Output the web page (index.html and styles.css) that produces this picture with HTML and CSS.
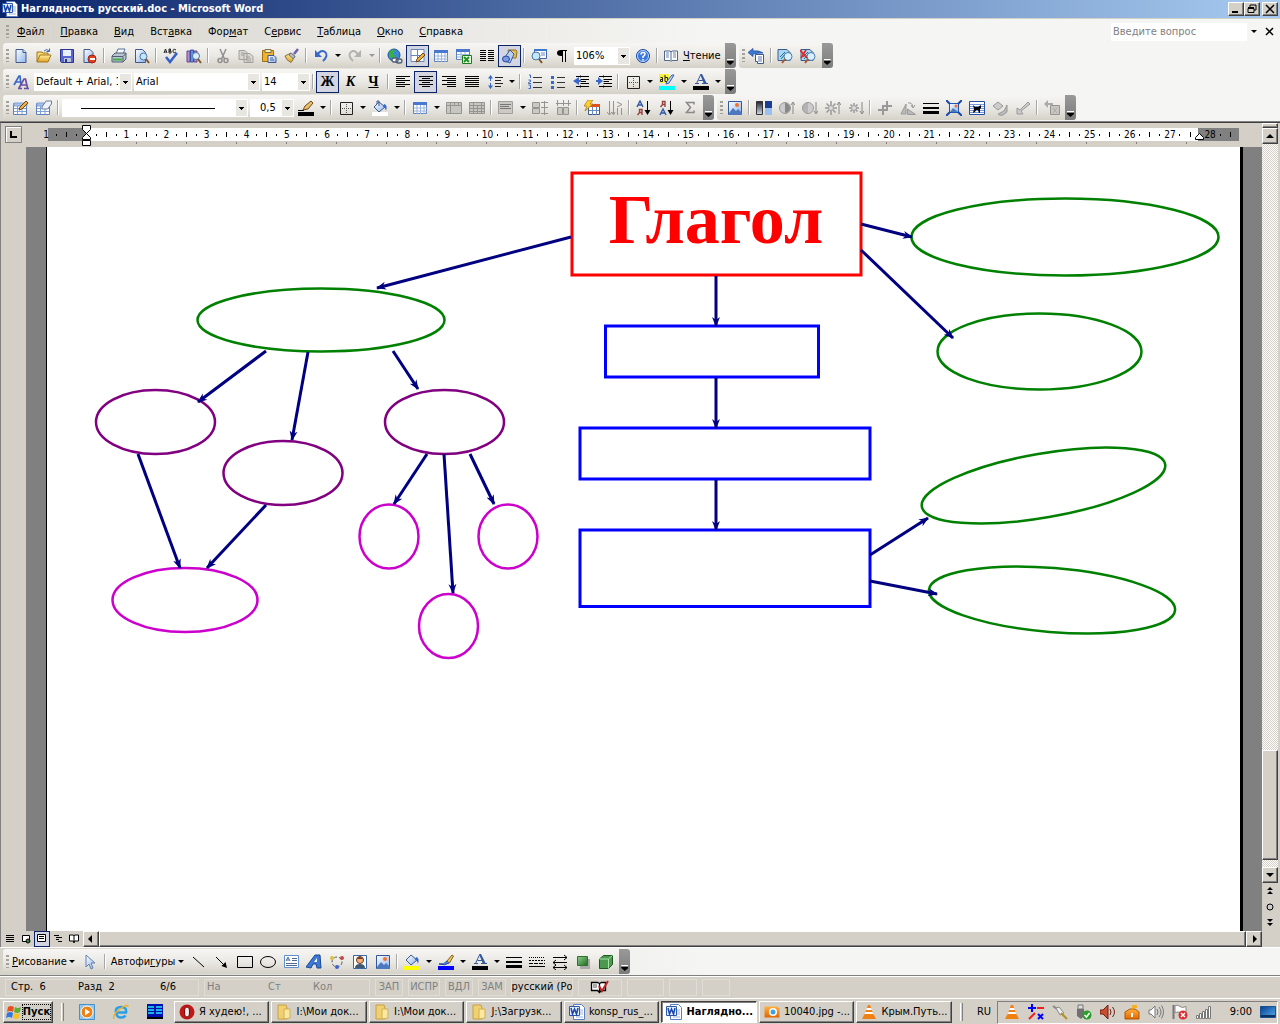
FILE: index.html
```html
<!DOCTYPE html>
<html lang="ru">
<head>
<meta charset="utf-8">
<title>Наглядность русский.doc - Microsoft Word</title>
<link rel="stylesheet" href="styles.css">
</head>
<body>
<svg class="defs" aria-hidden="true">
<defs>
<linearGradient id="gb" x2="1" y2="1"><stop stop-color="#fff"/><stop offset="1" stop-color="#8fb4ea"/></linearGradient>
<linearGradient id="gy" x2="0" y2="1"><stop stop-color="#fff0a0"/><stop offset="1" stop-color="#e0a020"/></linearGradient>
<linearGradient id="go" x2="0" y2="1"><stop stop-color="#ffb040"/><stop offset="1" stop-color="#e06800"/></linearGradient>
<linearGradient id="gg" x2="1" y2="1"><stop stop-color="#8fd08f"/><stop offset="1" stop-color="#1e6b1e"/></linearGradient>
<linearGradient id="gd" x2="0" y2="1"><stop stop-color="#223"/><stop offset="1" stop-color="#cde"/></linearGradient>
<linearGradient id="gs" x2="1" y2="1"><stop stop-color="#0a3c90"/><stop offset="1" stop-color="#50b0f0"/></linearGradient>
</defs>
<symbol id="word" viewBox="0 0 16 16"><path d="M4.500.5h8l3 3v12h-11z" fill="#fff" stroke="#5a7fc0"/><path d="M10 6h4M10 8h4M10 10h4M7 13h7" stroke="#9ab4e0"/><path d="M.5 2.500h10v9H.5z" fill="#e8f0ff" stroke="#2a58b0"/><path d="M2 4l1.500 6L5.500 5l2 5L9 4" fill="none" stroke="#1845a8" stroke-width="1.500"/></symbol>
<symbol id="new" viewBox="0 0 16 16"><path d="M3 1.500h7l3 3v10H3z" fill="url(#gb)" stroke="#3c5a90"/><path d="M10 1.500v3h3" fill="#dfe9fa" stroke="#3c5a90"/></symbol>
<symbol id="open" viewBox="0 0 16 16"><path d="M1 14V4h5l1 1h5v3" fill="#f8d870" stroke="#a07820"/><path d="M1 14l3-7h11l-3 7z" fill="url(#gy)" stroke="#a07820"/><path d="M8 3q3-3 5 0M13.500.5v3h-3" fill="none" stroke="#3c68b0"/></symbol>
<symbol id="save" viewBox="0 0 16 16"><path d="M1.500 1.500h13v13h-12l-1-1z" fill="#5968d0" stroke="#28348c"/><path d="M4 2h8v6H4z" fill="#e8f0ff"/><path d="M5 10h7v4H5z" fill="#bcc4d8"/><path d="M6 11h2v3H6z" fill="#28348c"/></symbol>
<symbol id="perm" viewBox="0 0 16 16"><path d="M2 1.500h6l3 3v10H2z" fill="url(#gb)" stroke="#3c5a90"/><circle cx="10" cy="11" r="4" fill="#e04020" stroke="#a02010"/><path d="M8 11h5" stroke="#fff" stroke-width="2"/></symbol>
<symbol id="print" viewBox="0 0 16 16"><path d="M5 6l2-5h7l-2 5" fill="#fff" stroke="#5070a0"/><path d="M1 8l3-3h11v6l-3 3H1z" fill="#b8c4d0" stroke="#506070"/><path d="M1 8.500h11l3-3M12 9v5" fill="none" stroke="#506070"/><path d="M2 11.500h9" stroke="#40b040" stroke-width="2"/></symbol>
<symbol id="preview" viewBox="0 0 16 16"><path d="M1.500 1.500h7l3 3v10h-10z" fill="url(#gb)" stroke="#3c5a90"/><circle cx="9.500" cy="8.500" r="3.500" fill="#c8e4f8" stroke="#4878a8"/><path d="M12 11l3 4" stroke="#80582c" stroke-width="2"/></symbol>
<symbol id="spell" viewBox="0 0 16 16"><path d="M1 5l1.500-4L4 5M1.500 4h2M6 5V1h1.500v2H6h2v2zM13 2q-3-2-3 1t3 1" fill="none" stroke="#222"/><path d="M3 9l4 5 7-9" fill="none" stroke="#3060c8" stroke-width="2.500"/></symbol>
<symbol id="books" viewBox="0 0 16 16"><path d="M1 3h3v11H1z" fill="#b890d0" stroke="#684088"/><path d="M4.500 2h3v12h-3z" fill="#6890e0" stroke="#3050a0"/><path d="M8 3h3v11H8z" fill="#c090c0" stroke="#684088"/><circle cx="10" cy="8" r="3.500" fill="#d8eefc" stroke="#4878a8"/><path d="M12 11l3 4" stroke="#80582c" stroke-width="2"/></symbol>
<symbol id="cut" viewBox="0 0 16 16"><path d="M5 1l4.500 10M11 1L6.500 11" stroke="#909090" stroke-width="1.500"/><circle cx="5" cy="12.500" r="2" fill="none" stroke="#909090" stroke-width="1.500"/><circle cx="11" cy="12.500" r="2" fill="none" stroke="#909090" stroke-width="1.500"/></symbol>
<symbol id="copy" viewBox="0 0 16 16"><path d="M1 2.500h6l2 2v7H1zM6 5.500h6l3 3v6H6z" fill="#d8d6d0" stroke="#a0a09c"/><path d="M3 5h3M3 7h3M8 9h4M8 11h5M8 13h5" stroke="#a0a09c"/></symbol>
<symbol id="paste" viewBox="0 0 16 16"><path d="M1.500 2.500h11v11h-11z" fill="#f0b030" stroke="#a07010"/><path d="M4 1.500h6v3H4z" fill="#f8f0c0" stroke="#807040"/><path d="M7 7.500h6l2 2v5H7z" fill="url(#gb)" stroke="#3c5a90"/><path d="M9 10h3M9 12h4" stroke="#3c5a90"/></symbol>
<symbol id="brush" viewBox="0 0 16 16"><path d="M14 1l-4 5" stroke="#7060b0" stroke-width="2.500"/><path d="M7 5l4 3.500-4 6Q2 12 1 8z" fill="url(#gy)" stroke="#807040"/><path d="M7 5l4 3.500-2 2L5 7z" fill="#b8c0c8" stroke="#707880"/></symbol>
<symbol id="undo" viewBox="0 0 16 16"><path d="M4 7Q8 1 12 4t-2 9" fill="none" stroke="#3868c8" stroke-width="2"/><path d="M2 2v7h7z" fill="#3868c8"/></symbol>
<symbol id="redo" viewBox="0 0 16 16"><path d="M11 7Q8 1 4 4t2 9" fill="none" stroke="#b4b2ae" stroke-width="2"/><path d="M14 2v7H7z" fill="#b4b2ae"/></symbol>
<symbol id="link" viewBox="0 0 16 16"><circle cx="7" cy="7" r="6" fill="#3c88d8" stroke="#2058a0"/><path d="M3 3q4-3 5 0l-2 3 3 2-2 4-4-3-1-3z" fill="#38b048"/><rect x="5" y="10" width="6" height="4" rx="2" fill="#fff" stroke="#506078" stroke-width="1.300"/><rect x="9" y="11" width="6" height="4" rx="2" fill="none" stroke="#506078" stroke-width="1.300"/></symbol>
<symbol id="tdraw" viewBox="0 0 16 16"><path d="M1 1.500h13v12H1zM1 7.500h13M7.500 2v12" fill="#fff" stroke="#6888b8"/><path d="M6 14l1-3 6-6 2 2-6 6z" fill="#f0b040" stroke="#704818"/></symbol>
<symbol id="table" viewBox="0 0 16 16"><path d="M1.500 2.500h13v11h-13z" fill="#fff" stroke="#5c80c0"/><path d="M1 2h14v3H1z" fill="#4878d0"/><path d="M2 8h13M2 11h13M5 5v9M8.500 5v9M12 5v9" stroke="#98b4e0"/></symbol>
<symbol id="excel" viewBox="0 0 16 16"><path d="M.5 1.500h13v10H.5z" fill="#fff" stroke="#5c80c0"/><path d="M0 1h14v3H0z" fill="#4878d0"/><path d="M1 6.500h12M1 9h12M5 4v8M9 4v8" stroke="#98b4e0"/><path d="M6.500 7.500h9v8h-9z" fill="#e8ffe8" stroke="#207820"/><path d="M8 9l5 5M13 9l-5 5" stroke="#209020" stroke-width="2"/></symbol>
<symbol id="cols" viewBox="0 0 16 16"><path d="M1 2.500h6M1 4.500h6M1 6.500h6M1 8.500h6M1 10.500h6M1 12.500h6M9 2.500h6M9 4.500h6M9 6.500h6M9 8.500h6M9 10.500h6M9 12.500h6" stroke="#000"/></symbol>
<symbol id="draw" viewBox="0 0 16 16"><path d="M6 2h8l1 2-1 6h-6z" fill="#e8c050" stroke="#907020"/><path d="M1 12L8 2l4 4-4 9z" fill="#b8d0f0" stroke="#3858a8"/><ellipse cx="4" cy="11" rx="3.500" ry="3" fill="#7898e0" stroke="#2848a0"/></symbol>
<symbol id="map" viewBox="0 0 16 16"><path d="M3.500 1.500h12v9h-12z" fill="#fff" stroke="#3c68b0"/><path d="M3 1h13v2H3z" fill="#3c78d0"/><path d="M10 5h4M10 7h4" stroke="#6888c0"/><circle cx="5" cy="8" r="4" fill="#c0e8f8" stroke="#4878a8"/><path d="M8 11l3 4" stroke="#80582c" stroke-width="2"/></symbol>
<symbol id="para" viewBox="0 0 16 16"><path d="M7 8Q3 8 3 5t4-3h6v1h-1v11h-1V3H9v11H8V8z"/></symbol>
<symbol id="help" viewBox="0 0 16 16"><circle cx="8" cy="8" r="6.500" fill="#3878e0" stroke="#1848a0"/><circle cx="8" cy="8" r="5.500" fill="none" stroke="#c0d8ff"/><path d="M6 6.500q0-2 2-2t2 1.500-2 2.500V10M8 11v1.500" fill="none" stroke="#fff" stroke-width="1.500"/></symbol>
<symbol id="book" viewBox="0 0 16 16"><path d="M1.500 3H7l1 1 1-1h5.500v9.500H9l-1 1-1-1H1.500zM8 4v9" fill="#fff" stroke="#506890"/><path d="M3 5h3M3 7h3M3 9h3M10 5h3M10 7h3M10 9h3" stroke="#6c84b0"/></symbol>
<symbol id="back" viewBox="0 0 16 16"><path d="M0 4.500l5-4v2.500q6-1 10 2-5 0-10 1v2.500z" fill="#3c78d8" stroke="#1c4890" stroke-width=".7"/><path d="M7.500 6.500h8v9h-6v-2h-2z" fill="#fff" stroke="#3c5a90"/><path d="M10 9h4M10 11h4M10 13h4" stroke="#5878b0"/></symbol>
<symbol id="find" viewBox="0 0 16 16"><path d="M1 1.500h9l3 3v8H1z" fill="#a8d8f0" stroke="#3c5a90"/><path d="M3 9l5-5M4 11l5-6" stroke="#2870a0"/><circle cx="11" cy="8.500" r="4" fill="#d8f0ff" stroke="#4878a8"/><path d="M8 11l-3 4" stroke="#a85c2c" stroke-width="2"/></symbol>
<symbol id="findx" viewBox="0 0 16 16"><use href="#find"/><path d="M0 2l7 8M6 2L1 10" stroke="#e02020" stroke-width="1.500"/></symbol>
<symbol id="styles" viewBox="0 0 16 16"><path d="M1 11L6 2h1l1 9M3 8h5" fill="none" stroke="#3868c8" stroke-width="1.700"/><path d="M6 14l5-9h1.500l2 9M8 11h6M5 14.500h4M11 14.500h5" fill="none" stroke="#6850a0" stroke-width="1.700"/></symbol>
<symbol id="al" viewBox="0 0 16 16"><path d="M1 2.500h14M1 4.500h9M1 6.500h14M1 8.500h9M1 10.500h14M1 12.500h9" stroke="#000"/></symbol>
<symbol id="ac" viewBox="0 0 16 16"><path d="M1 2.500h14M4 4.500h8M1 6.500h14M4 8.500h8M1 10.500h14M4 12.500h8" stroke="#000"/></symbol>
<symbol id="ar" viewBox="0 0 16 16"><path d="M1 2.500h14M6 4.500h9M1 6.500h14M6 8.500h9M1 10.500h14M6 12.500h9" stroke="#000"/></symbol>
<symbol id="aj" viewBox="0 0 16 16"><path d="M1 2.500h14M1 4.500h14M1 6.500h14M1 8.500h14M1 10.500h14M1 12.500h14" stroke="#000"/></symbol>
<symbol id="spacing" viewBox="0 0 16 16"><path d="M3.500 2v12" stroke="#3868c8" stroke-dasharray="5 2"/><path d="M1 4.500L3.500 1 6 4.500zM1 11.500L3.500 15 6 11.500z" fill="#3868c8"/><path d="M8 3.500h8M8 6.500h6M8 9.500h8M8 12.500h6" stroke="#222"/></symbol>
<symbol id="num" viewBox="0 0 16 16"><path d="M2 1h1.500v3M1.500 6h2v1.500l-2 1v1h2.500M1.500 11h2v3.500h-2" fill="none" stroke="#3868c8"/><path d="M6 3.500h9M6 8.500h9M6 13.500h9" stroke="#333"/></symbol>
<symbol id="bul" viewBox="0 0 16 16"><path d="M1 2h3v3H1zM1 7h3v3H1zM1 12h3v3H1z" fill="#3868c8"/><path d="M7 3.500h8M7 8.500h8M7 13.500h8" stroke="#333"/></symbol>
<symbol id="out" viewBox="0 0 16 16"><path d="M3 2.500h13M8 5.500h8M8 7.500h5M8 9.500h8M3 12.500h13" stroke="#000"/><path d="M6 3v3h2v2H6v3L0 7z" fill="#3868c8"/><path d="M7.500 1v14" stroke="#777" stroke-dasharray="1 1"/></symbol>
<symbol id="in" viewBox="0 0 16 16"><path d="M3 2.500h13M8 5.500h8M8 7.500h5M8 9.500h8M3 12.500h13" stroke="#000"/><path d="M2 3v3H0v2h2v3l5-4z" fill="#3868c8"/><path d="M7.500 1v14" stroke="#777" stroke-dasharray="1 1"/></symbol>
<symbol id="border" viewBox="0 0 16 16"><path d="M2.500 2.500h12v12h-12z" fill="none" stroke="#222"/><path d="M8.500 4v9M4 8.500h9" stroke="#555" stroke-dasharray="1 1"/></symbol>
<symbol id="hi" viewBox="0 0 16 16"><path d="M0 0h10v9H0z" fill="#f8f040"/><path d="M1.500 3.500h2v4h-2v-2h2M6 1v6.500h2.500v-4H6" fill="none" stroke="#222"/><path d="M15 1l-5 8-3 1 1-3 5-6z" fill="#c0d8f8" stroke="#3858a8"/><path d="M0 12h16v4H0z" fill="#0ff"/></symbol>
<symbol id="fc" viewBox="0 0 16 16"><path d="M3.500 9.500L7.500 1M5.500 6.500H10M2 9.500h4M9 9.500h6" fill="none" stroke="#34589c"/><path d="M7 0h2l5 10h-3z" fill="#34589c"/><path d="M0 12h16v4H0z"/></symbol>
<symbol id="tpen" viewBox="0 0 16 16"><path d="M.5 3.500h13v11H.5z" fill="#fff" stroke="#5c80c0"/><path d="M1 3h13v3H1zM1 8.500h12M1 11.500h12M4.500 6v8M9 6v8" fill="#a8c0e8" stroke="#80a0d8"/><path d="M6 10l1-3 6-6 2 2-6 6z" fill="#f0b040" stroke="#704818"/></symbol>
<symbol id="terase" viewBox="0 0 16 16"><path d="M.5 3.500h13v11H.5z" fill="#fff" stroke="#5c80c0"/><path d="M1 3h13v3H1zM1 8.500h12M1 11.500h12M4.500 6v8M9 6v8" fill="#a8c0e8" stroke="#80a0d8"/><path d="M6 7l4-6h5.500v3l-4 5H6z" fill="#eef2fa" stroke="#708098"/></symbol>
<symbol id="pen" viewBox="0 0 16 16"><path d="M0 10.500h6" stroke="#000"/><path d="M5 10l2-4 6-5 2 2-5 6z" fill="#e8c068" stroke="#704818"/><path d="M0 12h16v4H0z"/></symbol>
<symbol id="fillw" viewBox="0 0 16 16"><path d="M2 7l5-5 6 5-6 5z" fill="url(#gb)" stroke="#3c5a90"/><path d="M5 4V1h2v5" fill="none" stroke="#3c5a90"/><path d="M12 4q4 1 2 7-1-4-3-4z" fill="#3868c8"/><path d="M0 12h16v4H0z" fill="#fff"/></symbol>
<symbol id="filly" viewBox="0 0 16 16"><path d="M2 6l5-5 6 5-6 5z" fill="url(#gb)" stroke="#3c5a90"/><path d="M12 3q4 1 2 7-1-4-3-4z" fill="#3868c8"/><path d="M0 12h16v4H0z" fill="#ff0"/></symbol>
<symbol id="lineb" viewBox="0 0 16 16"><path d="M1 10q5 1 8-3l2 2q-4 3-10 1z" fill="#5088e0" stroke="#2048a0"/><path d="M9 7l5-6 1.500 1-4 7z" fill="#f0c860" stroke="#806020"/><path d="M0 12h16v4H0z" fill="#00f"/></symbol>
<symbol id="merge" viewBox="0 0 16 16"><path d="M.5 2.500h15v11H.5zM.5 5.500h15M4.500 3v11M8.500 3v2M12.500 3v2" fill="#c8c6c0" stroke="#949490"/></symbol>
<symbol id="split" viewBox="0 0 16 16"><path d="M.5 2.500h15v11H.5zM.5 5.500h15M4.500 3v11M8.500 6v8M12.500 3v11M1 8.500h14M1 11.500h14" fill="#c8c6c0" stroke="#949490"/></symbol>
<symbol id="valign" viewBox="0 0 16 16"><path d="M.5 1.500h14v12H.5z" fill="#ccc9c4" stroke="#a0a09c"/><path d="M2 4.500h11M2 6.500h9M2 8.500h11" stroke="#777"/></symbol>
<symbol id="drow" viewBox="0 0 16 16"><path d="M.5 2.500h7v5h-7zM.5 8.500h7v5h-7z" fill="#ccc9c4" stroke="#949490"/><path d="M9 2.500h7M9 7.500h7M9 13.500h7M12.500 1v14" stroke="#949490"/></symbol>
<symbol id="dcol" viewBox="0 0 16 16"><path d="M2.500 7.500h5v7h-5zM8.500 7.500h5v7h-5z" fill="#ccc9c4" stroke="#949490"/><path d="M2.500 0v6M8.500 0v6M13.500 0v6M1 3.500h15" stroke="#949490"/></symbol>
<symbol id="auto" viewBox="0 0 16 16"><path d="M4.500 4.500h11v10h-11z" fill="#fff" stroke="#3c5a90"/><path d="M4 4h12v3H4z" fill="#e05020"/><path d="M5 10.500h10M8.500 7v8M12.500 7v8" stroke="#6888c0"/><path d="M4 0h5L6 4h3L1 11l2-5H0z" fill="#ffd030" stroke="#a07010" stroke-width=".7"/></symbol>
<symbol id="tdir" viewBox="0 0 16 16"><path d="M2.500 1v13M6.500 1v13M10.500 8v7M14.500 8v7M10 2l5 2.500L10 7M0 12l2.500 3L5 12M5 12l1.500 3L8 12" fill="none" stroke="#949490"/></symbol>
<symbol id="sigma" viewBox="0 0 16 16"><path d="M12 4.500v-2H4.500l4 5-4 5H12v-2" fill="none" stroke="#888" stroke-width="1.500"/></symbol>
<symbol id="sa" viewBox="0 0 16 16"><path d="M1 7l3-6 3 6M2 5h4" fill="none" stroke="#3058a8" stroke-width="1.400"/><path d="M6 15V9.500H3.500v3H6M4 12l-2.500 3" fill="none" stroke="#984040" stroke-width="1.400"/><path d="M11.500 1v12" stroke="#000"/><path d="M8.500 10h6l-3 5z"/></symbol>
<symbol id="sz" viewBox="0 0 16 16"><path d="M6 7V1.500H3.500v3H6M4 4L1.500 7" fill="none" stroke="#984040" stroke-width="1.400"/><path d="M1 15l3-6 3 6M2 13h4" fill="none" stroke="#3058a8" stroke-width="1.400"/><path d="M11.500 1v12" stroke="#000"/><path d="M8.500 10h6l-3 5z"/></symbol>
<symbol id="pic" viewBox="0 0 16 16"><path d="M1.500 1.500h13v13h-13z" fill="url(#gb)" stroke="#3058a0"/><path d="M2 13l4-5 3 3 2-2 4 4v2H2z" fill="#4c78c0"/><circle cx="10" cy="5" r="2" fill="#f07030"/></symbol>
<symbol id="color" viewBox="0 0 16 16"><path d="M.5 1.500h6v13h-6z" fill="url(#gd)" stroke="#333"/><path d="M9 1h7v14H9z" fill="#1c3c90"/><path d="M9 8h7v7H9z" fill="#98c0f0"/></symbol>
<symbol id="conu" viewBox="0 0 16 16"><circle cx="6" cy="8" r="5.500" fill="#ccc" stroke="#999"/><path d="M6 3a5 5 0 010 10z" fill="#888"/><path d="M14 14V3M12 5l2-3 2 3" fill="none" stroke="#888"/></symbol>
<symbol id="cond" viewBox="0 0 16 16"><circle cx="6" cy="8" r="5.500" fill="#b4b4b4" stroke="#999"/><path d="M6 3a5 5 0 010 10z" fill="#ccc"/><path d="M14 2v11M12 11l2 3 2-3" fill="none" stroke="#888"/></symbol>
<symbol id="briu" viewBox="0 0 16 16"><circle cx="6" cy="8" r="2.500" fill="#ddd" stroke="#999"/><path d="M6 1v4M6 11v4M0 8h3M9 8h3M1.500 3.500L4 6M8 10l2.500 2.500M10.500 3.500L8 6M4 10l-2.500 2.500" stroke="#999" stroke-width="1.500"/><path d="M14 14V3M12 5l2-3 2 3" fill="none" stroke="#888"/></symbol>
<symbol id="brid" viewBox="0 0 16 16"><circle cx="6" cy="8" r="2.500" fill="#ddd" stroke="#999"/><path d="M6 3v2M6 11v2M1 8h2M9 8h2M2.500 4.500L4 6M8 10l1.500 1.500M9.500 4.500L8 6M4 10l-1.500 1.500" stroke="#999" stroke-width="1.500"/><path d="M14 2v11M12 11l2 3 2-3" fill="none" stroke="#888"/></symbol>
<symbol id="crop" viewBox="0 0 16 16"><path d="M6 15V6h9M1 10h9V1" fill="none" stroke="#999" stroke-width="2"/></symbol>
<symbol id="rot" viewBox="0 0 16 16"><path d="M1 14l5-10v10zM7.500 9l8 5.500h-8z" fill="#bbb" stroke="#999"/><path d="M8 3q4-1 5 4M11 5l2 3 2-3" fill="none" stroke="#999"/></symbol>
<symbol id="lines" viewBox="0 0 16 16"><path d="M0 3.500h16" stroke="#000"/><path d="M0 8h16" stroke="#000" stroke-width="2"/><path d="M0 12.500h16" stroke="#000" stroke-width="3"/></symbol>
<symbol id="comp" viewBox="0 0 16 16"><path d="M3.500 3.500h9v9h-9z" fill="url(#gb)" stroke="#2058b0"/><path d="M4 12l3-4 5 4z" fill="#4c78c0"/><circle cx="10" cy="6" r="1.500" fill="#f07030"/><path d="M0 0l4 4M16 0l-4 4M0 16l4-4M16 16l-4-4" stroke="#1848b0" stroke-width="2"/></symbol>
<symbol id="wrap" viewBox="0 0 16 16"><path d="M.5 1.500h15v13H.5z" fill="#fff" stroke="#2850a0"/><path d="M1 4.500h14M1 6.500h14M1 8.500h14M1 10.500h14M1 12.500h14" stroke="#7898d8"/><path d="M4 5l2 2h3l3-2v3l-1 1v4h-1l-1-3H7l-1 2-2 1 1-4z"/></symbol>
<symbol id="fmt" viewBox="0 0 16 16"><path d="M1 6l5-4 5 4-5 4z" fill="#ccc" stroke="#999"/><path d="M15 5l-3 6-6 3q1 2 5 1l4-3z" fill="#bbb" stroke="#999"/></symbol>
<symbol id="transp" viewBox="0 0 16 16"><path d="M13 2l-8 8-3-2v6h6l-2-3 9-7z" fill="#ccc" stroke="#999"/></symbol>
<symbol id="reset" viewBox="0 0 16 16"><path d="M6.500 5.500h9v9h-9z" fill="#c8c6c0" stroke="#949490"/><path d="M9 8l4 5M13 8l-4 5" stroke="#aaa"/><path d="M0 4l4-4v3h5v2H4v3z" fill="#aaa"/></symbol>
<symbol id="cursor" viewBox="0 0 16 16"><path d="M4 1v12l3-3 2 5 2-1-2-5h4z" fill="url(#gb)" stroke="#6080b0"/></symbol>
<symbol id="line" viewBox="0 0 16 16"><path d="M2 3l11 10" stroke="#000"/></symbol>
<symbol id="arrow" viewBox="0 0 16 16"><path d="M2 3l9 9" stroke="#000"/><path d="M13 14L7.500 12l4-4z"/></symbol>
<symbol id="rect" viewBox="0 0 16 16"><path d="M.5 2.500h15v11H.5z" fill="none" stroke="#000"/></symbol>
<symbol id="oval" viewBox="0 0 16 16"><ellipse cx="8" cy="8" rx="7.500" ry="5.500" fill="none" stroke="#000"/></symbol>
<symbol id="tbox" viewBox="0 0 16 16"><path d="M1.500 1.500h14v12h-14z" fill="#fff" stroke="#6090d0"/><path d="M3 7l2-4 2 4M4 6h2M9 4.500h5M9 6.500h5M3 9.500h11M3 11.500h11" fill="none" stroke="#506890"/></symbol>
<symbol id="wart" viewBox="0 0 16 16"><path d="M0 13L9 1h5l1 13h-4l-1-4H7l-2 4z" fill="#3c78d8" stroke="#1c4890"/><path d="M8 8l3-4v4z" fill="#fff"/></symbol>
<symbol id="diag" viewBox="0 0 16 16"><circle cx="8" cy="8" r="5" fill="none" stroke="#555" stroke-dasharray="3 2"/><circle cx="3" cy="4" r="2" fill="#d8c040"/><circle cx="13" cy="4" r="2" fill="#c04848"/><circle cx="8" cy="13" r="2" fill="#4060d0"/></symbol>
<symbol id="clip" viewBox="0 0 16 16"><path d="M1.500 1.500h13v13h-13z" fill="#fff" stroke="#3868a8"/><circle cx="8" cy="6" r="3.500" fill="#f0b080" stroke="#703818"/><path d="M3 14q0-4 5-4t5 4z" fill="#405870"/><path d="M5 5q2-4 6 0z" fill="#703818"/></symbol>
<symbol id="dash" viewBox="0 0 16 16"><path d="M0 3.500h16" stroke="#000" stroke-dasharray="1 1"/><path d="M0 6.500h16" stroke="#000" stroke-dasharray="2 1"/><path d="M0 9.500h16" stroke="#000" stroke-dasharray="4 1"/><path d="M0 12.500h16" stroke="#000"/></symbol>
<symbol id="arrs" viewBox="0 0 16 16"><path d="M1 3.500h14M12 1l3 2.500L12 6M1 8.500h14M4 6L1 8.500 4 11M1 13.500h14M4 11l-3 2.500L4 16M12 11l3 2.500-3 2.500" fill="none" stroke="#000"/></symbol>
<symbol id="shad" viewBox="0 0 16 16"><path d="M5 5h10v10H5z" fill="#aaa"/><path d="M2.500 2.500h10v9h-10z" fill="url(#gg)" stroke="#307030"/></symbol>
<symbol id="cube" viewBox="0 0 16 16"><path d="M1.500 5l4-3.500h9v9l-4 4h-9z" fill="#4c9850" stroke="#205820"/><path d="M1.500 5h9v9.500M10.500 5l4-3.500" fill="none" stroke="#a8e0a8"/></symbol>
<symbol id="v1" viewBox="0 0 16 16"><path d="M4 4.500h8M4 6.500h8M4 8.500h8M4 10.500h8" stroke="#000"/></symbol>
<symbol id="v2" viewBox="0 0 16 16"><path d="M4.500 4.500h7v6h-7z" fill="#fff" stroke="#000"/><circle cx="10" cy="10" r="2" fill="#408040" stroke="#000"/></symbol>
<symbol id="v3" viewBox="0 0 16 16"><path d="M3.500 3.500h8v7h-8z" fill="#fff" stroke="#000"/><path d="M5 5.500h5M5 7.500h5" stroke="#000"/></symbol>
<symbol id="v4" viewBox="0 0 16 16"><path d="M4 4.500h5M6 6.500h6M6 8.500h3M8 10.500h4" stroke="#000"/></symbol>
<symbol id="v5" viewBox="0 0 16 16"><path d="M3.500 4h4l.5 1 .5-1h4v6h-4L8 12l-.5-2h-4zM8 5v6" fill="#fff" stroke="#000"/></symbol>
<symbol id="chk" viewBox="0 0 20 16"><path d="M1.500 3.500h6l2 1 2-1h4v8h-4l-2 2-2-2h-6zM9.500 5v8" fill="#fff" stroke="#000" stroke-width="1.300"/><path d="M3 6h4M3 8h4" stroke="#555"/><path d="M9 7l3 5 6-10" fill="none" stroke="#c02020" stroke-width="2"/></symbol>
<symbol id="win" viewBox="0 0 16 16"><path d="M2 3q3-2 6 0L7 8Q4 6 1 8z" fill="#e85020"/><path d="M9 3q3 2 6 0l-1 5q-3 2-6 0z" fill="#60b030"/><path d="M1 9q3-2 6 0l-1 5q-3-2-6 0z" fill="#3078e0"/><path d="M8 9q3 2 6 0l-1 5q-3 2-6 0z" fill="#f8c020"/></symbol>
<symbol id="media" viewBox="0 0 16 16"><path d="M.5.5h15v15H.5z" fill="#90c8f0" stroke="#4890c8"/><circle cx="8" cy="8" r="6" fill="#f08010" stroke="#fff"/><path d="M6 4.500v7l5-3.500z" fill="#fff"/></symbol>
<symbol id="ie" viewBox="0 0 16 16"><path d="M3 8.500h10q1-5.500-5-5.500T3 8.500 8 13.500q3 0 4.500-2" fill="none" stroke="#28a0e8" stroke-width="2.500"/><path d="M1 15Q-1 11 7 5t8-2" fill="none" stroke="#f0b020" stroke-width="1.500"/></symbol>
<symbol id="cmd" viewBox="0 0 16 16"><path d="M0 0h16v14H0z" fill="#0010b0"/><path d="M1 3h6M1 6h6M1 9h6M9 3h6M9 6h6M9 9h6" stroke="#20e8f8" stroke-width="1.500"/><path d="M0 13h16v2H0z"/></symbol>
<symbol id="opera" viewBox="0 0 16 16"><circle cx="8" cy="8" r="7.500" fill="#c01818"/><ellipse cx="8" cy="8" rx="2.500" ry="5" fill="#eee" stroke="#700"/></symbol>
<symbol id="folder" viewBox="0 0 16 16"><path d="M2 1h8l1 3v11H2z" fill="#f0d070" stroke="#c8a040"/><path d="M8 5h6v9l-6 1z" fill="#fbe8a0" stroke="#d0b050"/></symbol>
<symbol id="jpg" viewBox="0 0 16 16"><path d="M.5 2.500h13l2 2v9h-15z" fill="url(#go)"/><circle cx="9" cy="8" r="4" fill="#fff"/><circle cx="9" cy="8" r="2.500" fill="#40a0e0"/></symbol>
<symbol id="vlc" viewBox="0 0 16 16"><path d="M1 15l2-4h10l2 4z" fill="#f08010"/><path d="M7 1h2l4 11q-5 2-10 0z" fill="#f08010"/><path d="M6 4h4l1 2H5zM4.500 8h7l.7 2H3.800z" fill="#fff"/></symbol>
<symbol id="math" viewBox="0 0 16 16"><path d="M0 4h8M4 0v8M10 10l5 5M15 10l-5 5" stroke="#00f" stroke-width="2"/><path d="M9 4h7M1 15l6-6" stroke="#f02020" stroke-width="2"/></symbol>
<symbol id="plug" viewBox="0 0 16 16"><path d="M1 2l4 3" stroke="#888" stroke-width="2"/><path d="M4 4l3-1 5 6-4 2z" fill="#eee" stroke="#888"/><path d="M9 9l3 3 3 3" stroke="#b09020" stroke-width="2"/></symbol>
<symbol id="usb" viewBox="0 0 16 16"><path d="M2 1h5v4H2z" fill="#ddd" stroke="#777"/><path d="M1 5h7v7l-3 3-4-3z" fill="#707070"/><circle cx="11" cy="11" r="4.500" fill="#28a028"/><path d="M8.500 11l2 2 3-4" fill="none" stroke="#fff" stroke-width="1.500"/></symbol>
<symbol id="spkr" viewBox="0 0 16 16"><path d="M0 6h3l5-5v14l-5-5H0z" fill="#c85030" stroke="#702010"/><path d="M10 5q2 3 0 6M12.500 3q4 5 0 10" fill="none" stroke="#702010"/></symbol>
<symbol id="house" viewBox="0 0 16 16"><path d="M1 8l5-3h5l4 3v7H1z" fill="url(#go)" stroke="#b05800"/><path d="M8 6V1h5v3H9" fill="#f8b020"/><path d="M8 9v4" stroke="#fff" stroke-width="2"/></symbol>
<symbol id="vol" viewBox="0 0 16 16"><path d="M1 6h2l4-4v12l-4-4H1z" fill="#fff" stroke="#777"/><path d="M9 5q2 3 0 6M11 3q4 5 0 10M13.500 1.500q4 6 0 13" fill="none" stroke="#777"/></symbol>
<symbol id="flag" viewBox="0 0 16 16"><path d="M1.500 1v14" stroke="#777" stroke-width="2"/><path d="M3 1.500q3-1 5 1t6 0v6q-3 1-5 0t-6 0z" fill="#fff" stroke="#888"/><circle cx="11" cy="11" r="4.500" fill="#d83030"/><path d="M9 9l4 4M13 9l-4 4" stroke="#fff" stroke-width="1.500"/></symbol>
<symbol id="sig" viewBox="0 0 16 16"><path d="M.5 11.500h2v3h-2zM3.500 9.500h2v5h-2zM6.500 7.500h2v7h-2zM9.500 5.500h2v9h-2zM12.500 2.500h2v12h-2z" fill="#fff" stroke="#777"/></symbol>
<symbol id="desk" viewBox="0 0 16 16"><path d="M.5 2.500h15v11H.5z" fill="url(#gs)" stroke="#185090"/><path d="M1 11h14v2H1z" fill="#103060"/></symbol>
</svg>

<header class="titlebar">
  <svg class="i"><use href="#word"/></svg>
  <h1>Наглядность русский.doc - Microsoft Word</h1>
  <div class="winbtns">
    <button class="raised" aria-label="Свернуть"><svg viewBox="0 0 12 10"><path d="M2 8h6" stroke="#000" stroke-width="2"/></svg></button>
    <button class="raised" aria-label="Восстановить"><svg viewBox="0 0 12 10"><path d="M4 1h6v5H8M4 1v2M2 4.500h6v4H2zM2 3.500h6" fill="none" stroke="#000"/></svg></button>
    <button class="raised close" aria-label="Закрыть"><svg viewBox="0 0 12 10"><path d="M2 1l8 8M10 1L2 9" stroke="#000" stroke-width="1.500"/></svg></button>
  </div>
</header>

<nav class="menubar">
  <span class="grip"></span>
  <button><u>Ф</u>айл</button><button><u>П</u>равка</button><button><u>В</u>ид</button><button>Вст<u>а</u>вка</button><button>Фор<u>м</u>ат</button><button>С<u>е</u>рвис</button><button><u>Т</u>аблица</button><button><u>О</u>кно</button><button><u>С</u>правка</button>
  <span class="grow"></span>
  <input class="ask" aria-label="Введите вопрос" placeholder="Введите вопрос">
  <button class="dd" aria-label="Список вопросов"></button>
  <button class="x" aria-label="Закрыть документ"><svg viewBox="0 0 12 10"><path d="M2 1l7 7M9 1L2 8" stroke="#000" stroke-width="1.500"/></svg></button>
</nav>

<div class="rows">
<div class="row">
  <div class="bar"><span class="grip"></span>
    <button class="b" aria-label="Создать"><svg class="i"><use href="#new"/></svg></button><button class="b" aria-label="Открыть"><svg class="i"><use href="#open"/></svg></button><button class="b" aria-label="Сохранить"><svg class="i"><use href="#save"/></svg></button><button class="b" aria-label="Разрешения"><svg class="i"><use href="#perm"/></svg></button><span class="sep"></span>
    <button class="b" aria-label="Печать"><svg class="i"><use href="#print"/></svg></button><button class="b" aria-label="Просмотр"><svg class="i"><use href="#preview"/></svg></button><span class="sep"></span>
    <button class="b" aria-label="Правописание"><svg class="i"><use href="#spell"/></svg></button><button class="b" aria-label="Справочники"><svg class="i"><use href="#books"/></svg></button><span class="sep"></span>
    <button class="b" aria-label="Вырезать"><svg class="i"><use href="#cut"/></svg></button><button class="b" aria-label="Копировать"><svg class="i"><use href="#copy"/></svg></button><button class="b" aria-label="Вставить"><svg class="i"><use href="#paste"/></svg></button><button class="b" aria-label="Формат по образцу"><svg class="i"><use href="#brush"/></svg></button><span class="sep"></span>
    <button class="b" aria-label="Отменить"><svg class="i"><use href="#undo"/></svg></button><button class="dd" aria-label="Список отмен"></button><button class="b" aria-label="Вернуть"><svg class="i"><use href="#redo"/></svg></button><button class="dd dim" aria-label="Список возвратов"></button><span class="sep"></span>
    <button class="b" aria-label="Гиперссылка"><svg class="i"><use href="#link"/></svg></button><button class="b on" aria-label="Таблицы и границы"><svg class="i"><use href="#tdraw"/></svg></button><button class="b" aria-label="Добавить таблицу"><svg class="i"><use href="#table"/></svg></button><button class="b" aria-label="Лист Excel"><svg class="i"><use href="#excel"/></svg></button><button class="b" aria-label="Колонки"><svg class="i"><use href="#cols"/></svg></button><button class="b on" aria-label="Рисование"><svg class="i"><use href="#draw"/></svg></button><span class="sep"></span>
    <button class="b" aria-label="Схема документа"><svg class="i"><use href="#map"/></svg></button><button class="b" aria-label="Непечатаемые знаки"><svg class="i"><use href="#para"/></svg></button>
    <select class="w-zoom" aria-label="Масштаб"><option>106%</option></select>
    <button class="b" aria-label="Справка"><svg class="i"><use href="#help"/></svg></button><span class="sep"></span>
    <button class="t read"><svg class="i"><use href="#book"/></svg><span><u>Ч</u>тение</span></button>
    <button class="more" aria-label="Параметры панели"></button>
  </div>
  <div class="bar"><span class="grip"></span>
    <button class="b" aria-label="Назад"><svg class="i"><use href="#back"/></svg></button><span class="sep"></span><button class="b" aria-label="Поиск"><svg class="i"><use href="#find"/></svg></button><button class="b" aria-label="Отменить поиск"><svg class="i"><use href="#findx"/></svg></button>
    <button class="more" aria-label="Параметры панели"></button>
  </div>
</div>
<div class="row">
  <div class="bar"><span class="grip"></span>
    <button class="b" aria-label="Стили"><svg class="i"><use href="#styles"/></svg></button>
    <select class="w-style" aria-label="Стиль"><option>Default + Arial, 14 пт</option></select>
    <select class="w-font" aria-label="Шрифт"><option>Arial</option></select>
    <select class="w-size" aria-label="Размер"><option>14</option></select><span class="sep"></span>
    <button class="b on f"><b>Ж</b></button><button class="b f"><i>К</i></button><button class="b f"><u>Ч</u></button><span class="sep"></span>
    <button class="b" aria-label="По левому краю"><svg class="i"><use href="#al"/></svg></button><button class="b on" aria-label="По центру"><svg class="i"><use href="#ac"/></svg></button><button class="b" aria-label="По правому краю"><svg class="i"><use href="#ar"/></svg></button><button class="b" aria-label="По ширине"><svg class="i"><use href="#aj"/></svg></button><button class="b" aria-label="Интервал"><svg class="i"><use href="#spacing"/></svg></button><button class="dd" aria-label="Выбор интервала"></button><span class="sep"></span>
    <button class="b" aria-label="Нумерация"><svg class="i"><use href="#num"/></svg></button><button class="b" aria-label="Маркеры"><svg class="i"><use href="#bul"/></svg></button><button class="b" aria-label="Уменьшить отступ"><svg class="i"><use href="#out"/></svg></button><button class="b" aria-label="Увеличить отступ"><svg class="i"><use href="#in"/></svg></button><span class="sep"></span>
    <button class="b" aria-label="Границы"><svg class="i"><use href="#border"/></svg></button><button class="dd" aria-label="Выбор границ"></button><button class="b" aria-label="Выделение цветом"><svg class="i"><use href="#hi"/></svg></button><button class="dd" aria-label="Цвет выделения"></button><button class="b" aria-label="Цвет шрифта"><svg class="i"><use href="#fc"/></svg></button><button class="dd" aria-label="Выбор цвета шрифта"></button>
    <button class="more" aria-label="Параметры панели"></button>
  </div>
</div>
<div class="row">
  <div class="bar"><span class="grip"></span>
    <button class="b" aria-label="Нарисовать таблицу"><svg class="i"><use href="#tpen"/></svg></button><button class="b" aria-label="Ластик"><svg class="i"><use href="#terase"/></svg></button><span class="sep"></span>
    <select class="w-line" aria-label="Тип линии"><option></option></select>
    <select class="w-pt" aria-label="Толщина линии"><option>0,5</option></select>
    <button class="b" aria-label="Цвет границы"><svg class="i"><use href="#pen"/></svg></button><button class="dd" aria-label="Выбор цвета границы"></button><span class="sep"></span>
    <button class="b" aria-label="Внешние границы"><svg class="i"><use href="#border"/></svg></button><button class="dd" aria-label="Выбор внешних границ"></button><button class="b" aria-label="Цвет заливки"><svg class="i"><use href="#fillw"/></svg></button><button class="dd" aria-label="Выбор заливки"></button><span class="sep"></span>
    <button class="b" aria-label="Таблица"><svg class="i"><use href="#table"/></svg></button><button class="dd" aria-label="Действия с таблицей"></button><button class="b" aria-label="Объединить ячейки"><svg class="i"><use href="#merge"/></svg></button><button class="b" aria-label="Разбить ячейки"><svg class="i"><use href="#split"/></svg></button><span class="sep"></span>
    <button class="b" aria-label="Выравнивание"><svg class="i"><use href="#valign"/></svg></button><button class="dd" aria-label="Выбор выравнивания"></button><button class="b" aria-label="Высота строк"><svg class="i"><use href="#drow"/></svg></button><button class="b" aria-label="Ширина столбцов"><svg class="i"><use href="#dcol"/></svg></button><span class="sep"></span>
    <button class="b" aria-label="Автоформат"><svg class="i"><use href="#auto"/></svg></button><button class="b" aria-label="Направление текста"><svg class="i"><use href="#tdir"/></svg></button><span class="sep"></span>
    <button class="b" aria-label="По возрастанию"><svg class="i"><use href="#sa"/></svg></button><button class="b" aria-label="По убыванию"><svg class="i"><use href="#sz"/></svg></button><button class="b" aria-label="Автосумма"><svg class="i"><use href="#sigma"/></svg></button>
    <button class="more" aria-label="Параметры панели"></button>
  </div>
  <div class="bar"><span class="grip"></span>
    <button class="b" aria-label="Рисунок"><svg class="i"><use href="#pic"/></svg></button><span class="sep"></span>
    <button class="b" aria-label="Цвет"><svg class="i"><use href="#color"/></svg></button><button class="b" aria-label="Больше контраст"><svg class="i"><use href="#conu"/></svg></button><button class="b" aria-label="Меньше контраст"><svg class="i"><use href="#cond"/></svg></button><button class="b" aria-label="Ярче"><svg class="i"><use href="#briu"/></svg></button><button class="b" aria-label="Темнее"><svg class="i"><use href="#brid"/></svg></button><span class="sep"></span>
    <button class="b" aria-label="Обрезка"><svg class="i"><use href="#crop"/></svg></button><button class="b" aria-label="Повернуть"><svg class="i"><use href="#rot"/></svg></button><button class="b" aria-label="Тип линии"><svg class="i"><use href="#lines"/></svg></button><button class="b" aria-label="Сжатие"><svg class="i"><use href="#comp"/></svg></button><button class="b" aria-label="Обтекание"><svg class="i"><use href="#wrap"/></svg></button><button class="b" aria-label="Формат"><svg class="i"><use href="#fmt"/></svg></button><button class="b" aria-label="Прозрачный цвет"><svg class="i"><use href="#transp"/></svg></button><span class="sep"></span>
    <button class="b" aria-label="Сброс"><svg class="i"><use href="#reset"/></svg></button>
    <button class="more" aria-label="Параметры панели"></button>
  </div>
</div>
</div>

<main class="doc">
  <div class="view">
    <div class="ruler">
      <button class="tab" aria-label="Табуляция"><svg viewBox="0 0 12 12"><path d="M3 2v6h6" fill="none" stroke="#000" stroke-width="2"/></svg></button>
      <div class="scale">
        <div class="cm"><span>1</span><s></s><i></i><s></s></div>
        <div class="cm"><span></span><s></s><i></i><s></s></div>
        <div class="cm"><span>1</span><s></s><i></i><s></s></div><div class="cm"><span>2</span><s></s><i></i><s></s></div><div class="cm"><span>3</span><s></s><i></i><s></s></div><div class="cm"><span>4</span><s></s><i></i><s></s></div><div class="cm"><span>5</span><s></s><i></i><s></s></div><div class="cm"><span>6</span><s></s><i></i><s></s></div><div class="cm"><span>7</span><s></s><i></i><s></s></div><div class="cm"><span>8</span><s></s><i></i><s></s></div><div class="cm"><span>9</span><s></s><i></i><s></s></div><div class="cm"><span>10</span><s></s><i></i><s></s></div><div class="cm"><span>11</span><s></s><i></i><s></s></div><div class="cm"><span>12</span><s></s><i></i><s></s></div><div class="cm"><span>13</span><s></s><i></i><s></s></div><div class="cm"><span>14</span><s></s><i></i><s></s></div><div class="cm"><span>15</span><s></s><i></i><s></s></div><div class="cm"><span>16</span><s></s><i></i><s></s></div><div class="cm"><span>17</span><s></s><i></i><s></s></div><div class="cm"><span>18</span><s></s><i></i><s></s></div><div class="cm"><span>19</span><s></s><i></i><s></s></div><div class="cm"><span>20</span><s></s><i></i><s></s></div><div class="cm"><span>21</span><s></s><i></i><s></s></div><div class="cm"><span>22</span><s></s><i></i><s></s></div><div class="cm"><span>23</span><s></s><i></i><s></s></div><div class="cm"><span>24</span><s></s><i></i><s></s></div><div class="cm"><span>25</span><s></s><i></i><s></s></div><div class="cm"><span>26</span><s></s><i></i><s></s></div><div class="cm"><span>27</span><s></s><i></i><s></s></div>
        <div class="cm last"><span>28</span><s></s><i></i></div>
        <svg class="mark left" viewBox="0 0 9 22"><path d="M.5.5h8v4l-4 4-4-4zM.5 14.500v-2l4-4 4 4v2zM.5 15.500h8v5h-8z" fill="#fff" stroke="#000"/></svg>
        <svg class="mark right" viewBox="0 0 9 22"><path d="M.5 14.500v-2l4-4 4 4v2z" fill="#fff" stroke="#000"/></svg>
      </div>
    </div>
    <div class="desk">
      <div class="sheet">
        <svg viewBox="47 147 1193 784" preserveAspectRatio="xMinYMin meet" fill="none">
          <defs><marker id="tip" markerUnits="userSpaceOnUse" markerWidth="10" markerHeight="10" refX="9" refY="5" orient="auto"><path d="M0 1l10 4-10 4 3-4z" fill="#000080"/></marker></defs>
          <path d="M572 173h289v102H572z" stroke="#ff0000" stroke-width="3"/>
          <text class="headword" x="716" y="243" text-anchor="middle">Глагол</text>
          <g stroke="#0000ff" stroke-width="3"><path d="M605.500 326h213v51h-213zM580 428h290v51H580zM580 530h290v76.500H580z"/></g>
          <g stroke="#008000" stroke-width="2.500">
            <ellipse cx="321" cy="320" rx="123.500" ry="31.500"/><ellipse cx="1065" cy="237" rx="153.500" ry="38.500"/><ellipse cx="1039.500" cy="351.500" rx="102" ry="38"/>
            <ellipse cx="1043.500" cy="485.500" rx="123.500" ry="32" transform="rotate(-9.900 1043.500 485.500)"/><ellipse cx="1052" cy="600" rx="123.500" ry="32" transform="rotate(4.700 1052 600)"/>
          </g>
          <g stroke="#800080" stroke-width="2.500"><ellipse cx="155.500" cy="422" rx="59.500" ry="32"/><ellipse cx="283" cy="473" rx="59.500" ry="32"/><ellipse cx="444.500" cy="422" rx="59.500" ry="32"/></g>
          <g stroke="#cc00cc" stroke-width="2.500"><ellipse cx="389" cy="536.500" rx="29.500" ry="32"/><ellipse cx="508" cy="536.500" rx="29.500" ry="32"/><ellipse cx="448.500" cy="626" rx="29.500" ry="32"/><ellipse cx="185" cy="600" rx="72.500" ry="32"/></g>
          <g stroke="#000080" stroke-width="3" marker-end="url(#tip)">
            <path d="M571 237L377 288"/><path d="M861 224l51 13"/><path d="M861 250l92 88"/>
            <path d="M716 276v50"/><path d="M716 378v50"/><path d="M716 480v50"/>
            <path d="M266 351l-68 51"/><path d="M308 352l-16 88"/><path d="M393 351l25 38"/>
            <path d="M138 454l42 114"/><path d="M266 505l-59 63"/><path d="M427 454l-33 50"/>
            <path d="M444 454l9 139"/><path d="M470 454l24 50"/>
            <path d="M870 555l58-37"/><path d="M870 581l67 13"/>
          </g>
        </svg>
      </div>
    </div>
    <div class="hbar">
      <button class="v" aria-label="Обычный"><svg class="i"><use href="#v1"/></svg></button><button class="v" aria-label="Веб-документ"><svg class="i"><use href="#v2"/></svg></button><button class="v on" aria-label="Разметка страницы"><svg class="i"><use href="#v3"/></svg></button><button class="v" aria-label="Структура"><svg class="i"><use href="#v4"/></svg></button><button class="v" aria-label="Режим чтения"><svg class="i"><use href="#v5"/></svg></button>
      <button class="raised sb" aria-label="Влево"><svg viewBox="0 0 10 10"><path d="M6 1v8L2 5z"/></svg></button>
      <div class="raised thumb-h"></div>
      <button class="raised sb" aria-label="Вправо"><svg viewBox="0 0 10 10"><path d="M4 1v8l4-4z"/></svg></button>
    </div>
  </div>
  <div class="vbar">
    <div class="raised splitter"></div>
    <button class="raised sb" aria-label="Вверх"><svg viewBox="0 0 10 10"><path d="M1 7h8L5 3z"/></svg></button>
    <div class="track"><div class="before"></div><div class="raised thumb-v"></div><div class="after"></div></div>
    <button class="raised sb" aria-label="Вниз"><svg viewBox="0 0 10 10"><path d="M1 3h8L5 7z"/></svg></button>
    <button class="nav" aria-label="Предыдущая страница"><svg viewBox="0 0 10 10"><path d="M5 1l3 3H2zM5 5l3 3H2z"/></svg></button>
    <button class="nav" aria-label="Выбор объекта"><svg viewBox="0 0 10 10"><circle cx="5" cy="5" r="3" fill="#ccc" stroke="#000"/></svg></button>
    <button class="nav" aria-label="Следующая страница"><svg viewBox="0 0 10 10"><path d="M2 1h6L5 4zM2 5h6L5 8z"/></svg></button>
  </div>
</main>

<div class="drawrow">
  <div class="bar"><span class="grip"></span>
    <button class="t menu"><span><u>Р</u>исование</span><span class="tri"></span></button>
    <button class="b" aria-label="Выбор объектов"><svg class="i"><use href="#cursor"/></svg></button><span class="sep"></span>
    <button class="t menu"><span>Автофи<u>г</u>уры</span><span class="tri"></span></button>
    <button class="b" aria-label="Линия"><svg class="i"><use href="#line"/></svg></button><button class="b" aria-label="Стрелка"><svg class="i"><use href="#arrow"/></svg></button><button class="b" aria-label="Прямоугольник"><svg class="i"><use href="#rect"/></svg></button><button class="b" aria-label="Овал"><svg class="i"><use href="#oval"/></svg></button><button class="b" aria-label="Надпись"><svg class="i"><use href="#tbox"/></svg></button><button class="b" aria-label="WordArt"><svg class="i"><use href="#wart"/></svg></button><button class="b" aria-label="Диаграмма"><svg class="i"><use href="#diag"/></svg></button><button class="b" aria-label="Картинка"><svg class="i"><use href="#clip"/></svg></button><button class="b" aria-label="Рисунок из файла"><svg class="i"><use href="#pic"/></svg></button><span class="sep"></span>
    <button class="b" aria-label="Заливка"><svg class="i"><use href="#filly"/></svg></button><button class="dd" aria-label="Выбор цвета заливки"></button><button class="b" aria-label="Цвет линий"><svg class="i"><use href="#lineb"/></svg></button><button class="dd" aria-label="Выбор цвета линий"></button><button class="b" aria-label="Цвет текста"><svg class="i"><use href="#fc"/></svg></button><button class="dd" aria-label="Выбор цвета текста"></button>
    <button class="b" aria-label="Толщина"><svg class="i"><use href="#lines"/></svg></button><button class="b" aria-label="Штрих"><svg class="i"><use href="#dash"/></svg></button><button class="b" aria-label="Вид стрелки"><svg class="i"><use href="#arrs"/></svg></button><button class="b" aria-label="Тень"><svg class="i"><use href="#shad"/></svg></button><button class="b" aria-label="Объем"><svg class="i"><use href="#cube"/></svg></button>
    <button class="more" aria-label="Параметры панели"></button>
  </div>
</div>

<div class="status">
  <div class="cell pos"><span>Стр.&nbsp; 6</span><span>Разд&nbsp; 2</span><span>6/6</span></div>
  <div class="cell cur"><span>На</span><span>Ст</span><span>Кол</span></div>
  <div class="cell mode">ЗАП</div><div class="cell mode wide">ИСПР</div><div class="cell mode">ВДЛ</div><div class="cell mode">ЗАМ</div>
  <div class="cell lang">русский (Ро</div>
  <div class="cell chk"><svg><use href="#chk"/></svg></div><div class="cell e1"></div><div class="cell e2"></div><div class="cell e2"></div>
</div>

<footer class="taskbar">
  <button class="raised start"><svg class="i"><use href="#win"/></svg><span>Пуск</span></button>
  <span class="split"></span>
  <div class="quick"><button aria-label="Проигрыватель"><svg class="i"><use href="#media"/></svg></button><button aria-label="Internet Explorer"><svg class="i"><use href="#ie"/></svg></button><button aria-label="Файловый менеджер"><svg class="i"><use href="#cmd"/></svg></button></div>
  <div class="tasks">
    <button class="raised"><svg class="i"><use href="#opera"/></svg><span>Я худею!, ...</span></button>
    <button class="raised"><svg class="i"><use href="#folder"/></svg><span>I:\Мои док...</span></button>
    <button class="raised"><svg class="i"><use href="#folder"/></svg><span>I:\Мои док...</span></button>
    <button class="raised"><svg class="i"><use href="#folder"/></svg><span>J:\Загрузк...</span></button>
    <button class="raised"><svg class="i"><use href="#word"/></svg><span>konsp_rus_...</span></button>
    <button class="raised active"><svg class="i"><use href="#word"/></svg><span>Наглядно...</span></button>
    <button class="raised"><svg class="i"><use href="#jpg"/></svg><span>10040.jpg -...</span></button>
    <button class="raised"><svg class="i"><use href="#vlc"/></svg><span>Крым.Путь...</span></button>
  </div>
  <span class="split"></span>
  <span class="kbd">RU</span>
  <div class="tray">
    <svg class="i"><use href="#vlc"/></svg><svg class="i"><use href="#math"/></svg><svg class="i"><use href="#plug"/></svg><svg class="i"><use href="#usb"/></svg><svg class="i"><use href="#spkr"/></svg><svg class="i"><use href="#house"/></svg><svg class="i"><use href="#vol"/></svg><svg class="i"><use href="#flag"/></svg><svg class="i"><use href="#sig"/></svg>
    <time>9:00</time>
    <svg class="i"><use href="#desk"/></svg>
  </div>
</footer>
</body>
</html>
```
FILE: styles.css
```css
* { box-sizing: border-box; }
body {
  margin: 0;
  min-height: 100vh;
  display: flex;
  flex-direction: column;
  background: #d4d0c8;
  color: #000;
  font: 11px/14px "DejaVu Sans Condensed", "DejaVu Sans", sans-serif;
}
button, select, input { font: inherit; color: inherit; margin: 0; border: 0; padding: 0; background: none; border-radius: 0; flex: none; }
button { display: flex; align-items: center; justify-content: center; white-space: nowrap; }
.defs { width: 0; height: 0; position: absolute; }
.i { width: 16px; height: 16px; flex: none; }
.grow { flex: 1; }
.raised { background: #d4d0c8; border: 1px solid; border-color: #fff #404040 #404040 #fff; box-shadow: inset -1px -1px #808080; }

.titlebar { display: flex; align-items: center; height: 18px; padding: 0 2px; gap: 3px; background: linear-gradient(90deg, #0a246a, #a6caf0); }
.titlebar h1 { margin: 0; flex: 1; font-size: 11px; line-height: 14px; color: #fff; }
.winbtns { display: flex; }
.winbtns button { width: 16px; height: 14px; }
.winbtns .close { margin-left: 2px; }
.winbtns svg { width: 12px; height: 10px; }

.menubar { display: flex; align-items: center; height: 25px; padding: 1px 4px 0 6px; background: linear-gradient(90deg, #d6d3cb, #f5f5f3 55%); border-top: 1px solid #d4d0c8; }
.menubar button { padding: 0 8px; }
.menubar .ask { width: 136px; height: 18px; padding: 0 2px; background: #fff; }
.ask::placeholder { color: #808080; opacity: 1; }
.menubar .dd { padding: 0; height: 18px; width: 13px; }
.menubar .x { padding: 0; width: 12px; margin-left: 4px; }
.x svg { width: 12px; height: 10px; }
.grip { width: 3px; height: 13px; flex: none; background: repeating-linear-gradient(180deg, #a4a19a 0 2px, transparent 2px 4px); }

.rows { background: linear-gradient(90deg, #d6d3cb, #f5f5f3 55%); border-bottom: 1px solid #808080; }
.row { display: flex; height: 26px; gap: 3px; padding-left: 3px; }
.bar { display: flex; align-items: center; height: 25px; padding-left: 3px; border-radius: 3px; background: linear-gradient(#f7f6f4, #ebe9e4 50%, #d4d1c8); }
.b { width: 23px; height: 22px; }
.b.on, .v.on { background: #d3d6e0; border: 1px solid #0a246a; }
.sep { width: 2px; height: 15px; margin: 0 2px; background: linear-gradient(90deg, #a6a6a6 50%, #fff 50%); flex: none; }
.dd, .tri { width: 11px; height: 22px; flex: none; }
.dd::after, .tri::after { content: ""; border: 3px solid transparent; border-top-color: #000; border-bottom: 0; }
.dd.dim::after { border-top-color: #999; }
.tri { display: flex; align-items: center; justify-content: center; }
.more { width: 11px; height: 25px; margin-left: 2px; border-radius: 0 3px 3px 0; background: linear-gradient(#999, #7c7c7c); align-items: flex-end; padding-bottom: 3px; }
.more::after { content: ""; width: 7px; height: 6px; background: linear-gradient(#fff 0 1px, transparent 1px 2px, #000 2px); clip-path: polygon(0 0, 100% 0, 100% 3px, 50% 100%, 0 3px); }
.f { font-family: "Liberation Serif", serif; font-size: 14px; font-weight: bold; }

select {
  appearance: none; height: 18px; padding: 0 14px 0 2px; line-height: 18px;
  background:
    linear-gradient(#000, #000) no-repeat right 4px top 8px / 5px 1px,
    linear-gradient(#000, #000) no-repeat right 5px top 9px / 3px 1px,
    linear-gradient(#000, #000) no-repeat right 6px top 10px / 1px 1px,
    linear-gradient(#e8e6e0, #e8e6e0) no-repeat right 1px top 1px / 11px 16px,
    #fff;
}
.w-zoom { width: 56px; margin: 0 1px; }
.w-style { width: 98px; margin-left: 2px; }
.w-font { width: 126px; margin-left: 2px; }
.w-size { width: 48px; margin-left: 2px; }
.w-line {
  width: 186px; margin-left: 1px;
  background:
    linear-gradient(#000, #000) no-repeat right 4px top 8px / 5px 1px,
    linear-gradient(#000, #000) no-repeat right 5px top 9px / 3px 1px,
    linear-gradient(#000, #000) no-repeat right 6px top 10px / 1px 1px,
    linear-gradient(#e8e6e0, #e8e6e0) no-repeat right 1px top 1px / 11px 16px,
    linear-gradient(#000, #000) no-repeat left 19px top 9px / 134px 1px,
    #fff;
}
.w-pt { width: 44px; margin-left: 2px; padding-left: 10px; }
.t { gap: 4px; height: 22px; }
.read { padding: 0 2px 0 3px; }
.menu { gap: 0; padding: 0 1px 0 3px; }

.doc { flex: 1; display: flex; border-left: 1px solid #808080; border-top: 1px solid #404040; padding-right: 2px; min-height: 400px; }
.view { flex: 1; min-width: 0; display: flex; flex-direction: column; }
.ruler { display: flex; height: 24px; padding-left: 4px; }
.tab { width: 17px; height: 17px; margin-top: 3px; border: 1px solid #808080; box-shadow: inset 1px 1px #fff; }
.tab svg { width: 12px; height: 12px; }
.scale {
  position: relative; flex: 1; display: flex; height: 22px; margin: 0 23px 0 19px; padding-right: 4px;
  background:
    repeating-linear-gradient(90deg, #808080 0 1px, transparent 1px 50px) 95px 19px / 1090px 2px no-repeat,
    linear-gradient(90deg, #d4d0c8 7px, #808080 7px 45px, #fff 45px calc(100% - 41px), #808080 calc(100% - 41px)) 0 5px / 100% 13px no-repeat;
}
.cm { flex: 4; display: flex; height: 13px; margin-top: 5px; min-width: 0; }
.cm.last { flex: 3; }
.cm > * { flex: 1 1 0; min-width: 0; display: flex; justify-content: center; align-items: center; text-decoration: none; font-size: 10px; line-height: 13px; }
.cm s::after { content: ""; width: 1px; height: 2px; background: #000; }
.cm i::after { content: ""; width: 1px; height: 5px; background: #000; }
.mark { position: absolute; top: 2px; width: 9px; height: 22px; }
.mark.left { left: 41px; }
.mark.right { right: 35px; }
.desk { flex: 1; display: flex; background: #808080; margin-left: 25px; padding: 0 19px 0 20px; }
.sheet { flex: 1; background: #fff; border-left: 1px solid #000; border-right: 3px solid #000; }
.sheet svg { display: block; width: 100%; }
.headword { font: bold 70px "Liberation Serif", serif; fill: #f00; }
.hbar { display: flex; height: 16px; padding-left: 1px; }
.v { width: 16px; height: 16px; overflow: hidden; }
.hbar .v + .sb { margin-left: 1px; }
.sb { width: 16px; height: 16px; }
.sb svg, .nav svg { width: 10px; height: 10px; }
.thumb-h { flex: 1; }
.vbar { width: 16px; display: flex; flex-direction: column; }
.splitter { height: 5px; }
.track { flex: 1; display: flex; flex-direction: column; background: repeating-conic-gradient(#fff 0 25%, #d4d0c8 0 50%) 0 0 / 2px 2px; }
.before { flex: 608; }
.thumb-v { flex: 108; }
.after { flex: 7; }
.nav { width: 16px; height: 16px; }
.nav:last-child { margin-bottom: 16px; }

.drawrow { border-top: 1px solid #fff; border-bottom: 1px solid #808080; padding: 1px 0 0 3px; height: 29px; display: flex; background: linear-gradient(90deg, #d6d3cb, #f5f5f3 55%); }

.status { display: flex; align-items: center; height: 22px; padding: 0 5px 1px; gap: 5px; border-top: 1px solid #fff; }
.cell { height: 17px; border: 1px solid #e0ddd6; display: flex; align-items: center; justify-content: center; white-space: nowrap; overflow: hidden; }
.pos { width: 194px; display: grid; grid-template-columns: 67px 82px auto; justify-content: start; padding-left: 5px; }
.cur { width: 166px; display: grid; grid-template-columns: 61px 45px auto; justify-content: start; padding-left: 2px; color: #808080; }
.mode { width: 28px; color: #808080; }
.mode.wide { width: 32px; }
.lang { width: 62px; }
.chk { width: 44px; }
.chk svg { width: 20px; height: 16px; }
.e1 { width: 37px; }
.e2 { width: 28px; }

.taskbar { display: flex; align-items: center; height: 27px; padding: 2px 2px 2px 3px; border-top: 1px solid #fff; }
.start { width: 50px; height: 22px; gap: 1px; font-weight: bold; }
.start span { outline: 1px dotted #000; }
.split { width: 3px; height: 18px; margin: 0 8px; background: linear-gradient(90deg, #fff 1px, #d4d0c8 1px 2px, #808080 2px); flex: none; }
.quick { display: flex; gap: 18px; padding: 0 11px 0 7px; }
.tasks { flex: 1; display: flex; gap: 2px; min-width: 0; }
.tasks button { flex: 1 1 0; min-width: 0; height: 22px; padding: 0 4px; gap: 4px; justify-content: flex-start; overflow: hidden; }
.tasks .active { background: #fff; font-weight: bold; border-color: #404040 #fff #fff #404040; box-shadow: inset 1px 1px #808080; }
.kbd { margin: 0 2px 0 6px; }
.tray { display: flex; align-items: center; height: 23px; padding: 0 1px 0 6px; gap: 8px; border: 1px solid; border-color: #808080 #fff #fff #808080; margin-left: 4px; }
.tray time { width: 32px; text-align: right; }
```
